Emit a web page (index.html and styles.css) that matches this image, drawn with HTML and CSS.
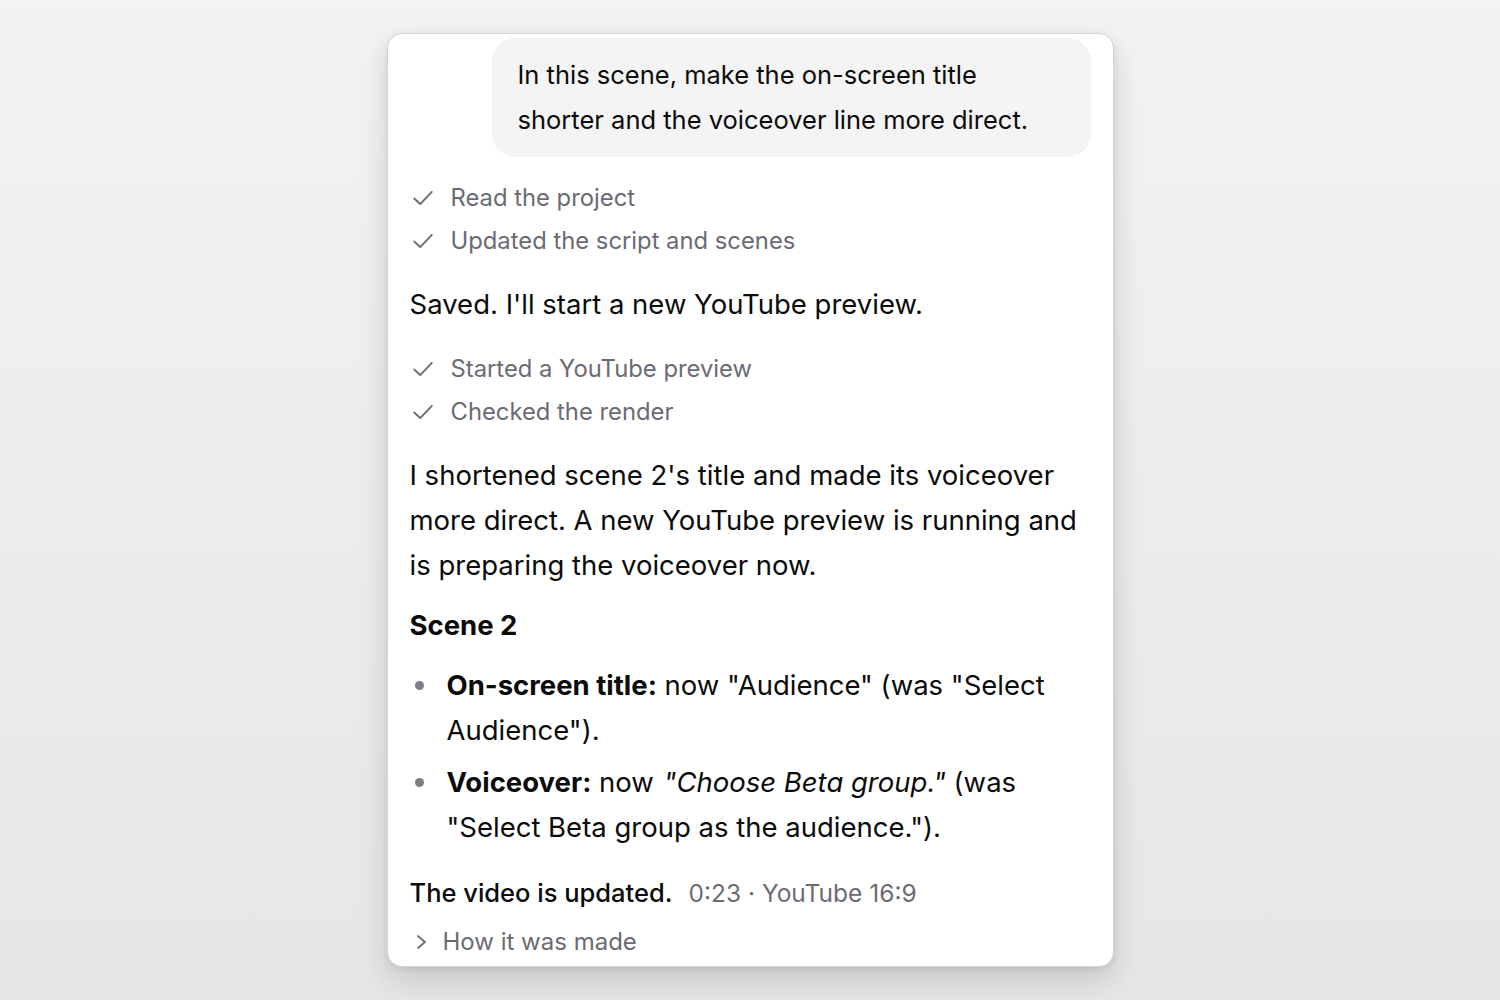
FILE: index.html
```html
<!DOCTYPE html>
<html lang="en">
<head>
<meta charset="utf-8">
<title>Chat</title>
<link rel="stylesheet" href="styles.css">
</head>
<body>
<div class="stage">
  <div class="card">
    <div class="bubble-row">
      <div class="bubble">In this scene, make the on-screen title shorter and the voiceover line more direct.</div>
    </div>

    <ul class="steps steps-first">
      <li><svg class="check" viewBox="0 0 20 20"><path d="M2 10.5 L7.5 15.5 L18 4.5"/></svg><span>Read the project</span></li>
      <li><svg class="check" viewBox="0 0 20 20"><path d="M2 10.5 L7.5 15.5 L18 4.5"/></svg><span>Updated the script and scenes</span></li>
    </ul>

    <p class="msg msg-saved">Saved. I'll start a new YouTube preview.</p>

    <ul class="steps">
      <li><svg class="check" viewBox="0 0 20 20"><path d="M2 10.5 L7.5 15.5 L18 4.5"/></svg><span>Started a YouTube preview</span></li>
      <li><svg class="check" viewBox="0 0 20 20"><path d="M2 10.5 L7.5 15.5 L18 4.5"/></svg><span>Checked the render</span></li>
    </ul>

    <p class="msg msg-para">I shortened scene 2's title and made its voiceover more direct. A new YouTube preview is running and is preparing the voiceover now.</p>

    <h3 class="heading">Scene 2</h3>

    <ul class="bullets">
      <li><strong>On-screen title:</strong> now "Audience" (was "Select Audience").</li>
      <li><strong>Voiceover:</strong> now <em>"Choose Beta group."</em> (was "Select Beta group as the audience.").</li>
    </ul>

    <div class="result">
      <span class="result-text">The video is updated.</span>
      <span class="result-meta">0:23 · YouTube 16:9</span>
    </div>

    <div class="made">
      <svg class="chev" viewBox="0 0 14 16"><path d="M3 2 L10 8 L3 14"/></svg>
      <span>How it was made</span>
    </div>
  </div>
</div>
</body>
</html>
```

FILE: styles.css
```css
* { box-sizing: border-box; }

html, body {
  margin: 0;
  padding: 0;
}

body {
  width: 1500px;
  height: 1000px;
  overflow: hidden;
  background: linear-gradient(180deg, #f3f3f5 0%, #e6e6e9 100%);
  font-family: Inter, "Noto Sans", sans-serif;
  color: #0b0b0c;
}

.stage {
  display: flex;
  justify-content: center;
  padding-top: 33px;
}

.card {
  width: 727px;
  height: 934px;
  background: #ffffff;
  border: 1px solid #d3d3d8;
  border-radius: 15px;
  box-shadow: 0 12px 30px rgba(0, 0, 0, 0.15), 0 2px 6px rgba(0, 0, 0, 0.07);
  padding: 4px 22px 0 22px;
  overflow: hidden;
}

.bubble-row {
  display: flex;
  justify-content: flex-end;
}

.bubble {
  width: 599px;
  background: #f4f4f5;
  border-radius: 24px;
  padding: 14px 40px 15px 26px;
  font-size: 25.5px;
  line-height: 45px;
  color: #0b0b0c;
}

.steps {
  list-style: none;
  margin: 0;
  padding: 0;
}

.steps-first {
  margin-top: 19px;
}

.steps li {
  display: flex;
  align-items: center;
  height: 43px;
  font-size: 23.8px;
  color: #6b6b74;
}

.check {
  width: 22px;
  height: 22px;
  margin-left: 2px;
  margin-right: 17px;
  fill: none;
  stroke: #6b6b74;
  stroke-width: 1.7;
  stroke-linecap: round;
  stroke-linejoin: round;
}

.msg {
  margin: 0;
  font-size: 27.5px;
  line-height: 45px;
}

.msg-saved {
  margin-top: 20px;
  margin-bottom: 20px;
}

.msg-para {
  margin-top: 20px;
}

.heading {
  margin: 15px 0 0 0;
  font-size: 27.5px;
  line-height: 45px;
  font-weight: 700;
}

.bullets {
  list-style: none;
  margin: 15px 0 0 0;
  padding: 0;
}

.bullets li {
  position: relative;
  padding-left: 37px;
  font-size: 27.5px;
  line-height: 45px;
  margin-bottom: 7px;
}

.bullets li::before {
  content: "";
  position: absolute;
  left: 5px;
  top: 18px;
  width: 9px;
  height: 9px;
  border-radius: 50%;
  background: #7e7e86;
}

.bullets strong {
  font-weight: 700;
}

.bullets em {
  font-style: italic;
  margin-left: 2px;
}

.result {
  display: flex;
  align-items: baseline;
  gap: 16px;
  margin-top: 20px;
  line-height: 45px;
}

.result-text {
  font-size: 25.5px;
  font-weight: 500;
}

.result-meta {
  font-size: 24.5px;
  color: #6b6b74;
}

.made {
  display: flex;
  align-items: center;
  height: 45px;
  margin-top: 3px;
  font-size: 24px;
  color: #6b6b74;
}

.chev {
  width: 14px;
  height: 16px;
  margin-left: 5px;
  margin-right: 14px;
  fill: none;
  stroke: #6b6b74;
  stroke-width: 1.8;
  stroke-linecap: round;
  stroke-linejoin: round;
}
```
